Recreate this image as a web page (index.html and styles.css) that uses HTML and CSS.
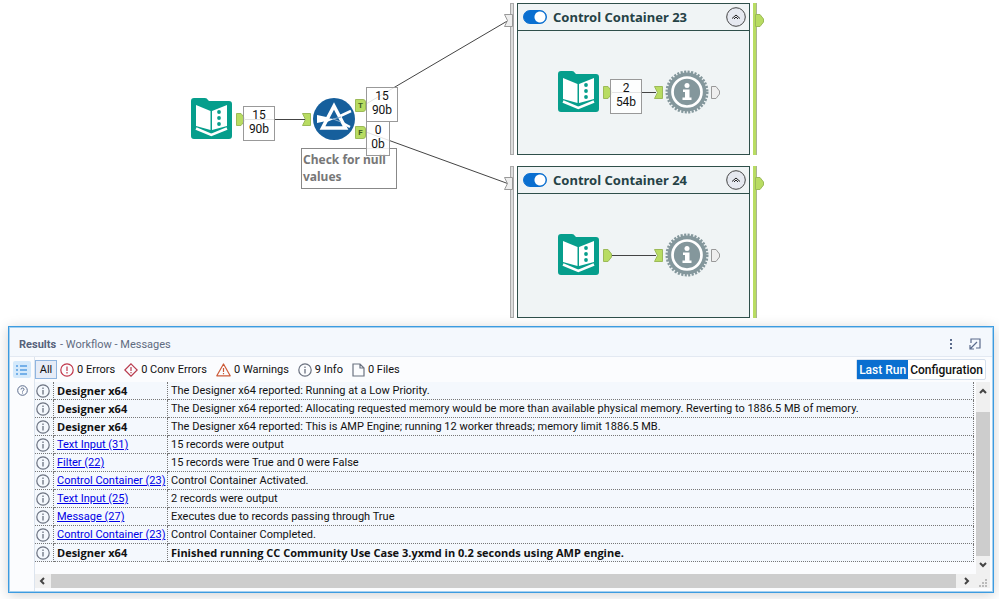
FILE: index.html
```html
<!DOCTYPE html>
<html lang="en">
<head>
    <meta charset="utf-8">
    <title>Designer - Workflow</title>
    <meta name="viewport" content="width=device-width, initial-scale=1.0">
    <link rel="stylesheet" href="styles.css">
</head>
<body>
    <!-- Shared icons -->
    <svg class="sprite" aria-hidden="true">
        <symbol id="book" viewBox="0 0 41 41">
            <path d="M3 0H14Q16 0 17 2L18 3H38Q41 3 41 6V38Q41 41 38 41H3Q0 41 0 38V3Q0 0 3 0Z" fill="#069e8c"/>
            <path d="M5 7L19.500 13V32L5 28Z" fill="#fff"/>
            <path d="M21 13L36 7V28L21 32Z" fill="#fff"/>
            <path d="M5 30.500L20.300 37L36 30.500" fill="none" stroke="#fff" stroke-width="2.500"/>
            <circle cx="28" cy="14" r="1.900" fill="#069e8c"/>
            <circle cx="28" cy="20" r="1.900" fill="#069e8c"/>
            <circle cx="28" cy="26" r="1.900" fill="#069e8c"/>
        </symbol>
        <symbol id="filter" viewBox="0 0 42 42">
            <circle cx="21" cy="21" r="21" fill="#165f9c"/>
            <path d="M4 17L18 20V22L4 25Z" fill="#fff"/>
            <path d="M24 19.500L38 13M24 22L37 29" stroke="#fff" stroke-width="2.500"/>
            <path d="M21 8L32.500 30H9.500Z" fill="#165f9c" stroke="#fff" stroke-width="3.500"/>
            <path d="M13 20L21 21L14 24Z" fill="#fff"/>
            <path d="M20 21L28 19M20 21L28 24" stroke="#8fb2d0" stroke-width="1"/>
        </symbol>
        <symbol id="gear" viewBox="0 0 44 44">
            <circle cx="22" cy="22" r="20" fill="none" stroke="#84979c" stroke-width="3" stroke-dasharray="2.100 1.390"/>
            <circle cx="22" cy="22" r="19.500" fill="#84979c"/>
            <circle cx="22" cy="22" r="14.500" fill="none" stroke="#fff" stroke-width="2.700"/>
            <circle cx="22" cy="15.500" r="2.500" fill="#fff"/>
            <path d="M18 19.500H24.500V27.500H26.500V30H17.500V27.500H20V22H18Z" fill="#fff"/>
        </symbol>
        <symbol id="port-out" viewBox="0 0 9 13">
            <path d="M.5 .5H5L8.500 5V8L5 12.500H.5Z"/>
        </symbol>
        <symbol id="port-in" viewBox="0 0 9 13">
            <path d="M.5 .5H8.500V12.500H.5L3.500 6.500Z"/>
        </symbol>
        <symbol id="collapse" viewBox="0 0 20 20">
            <circle cx="10" cy="10" r="9.300" fill="#e6e9f0" stroke="#444" stroke-width="1"/>
            <path d="M6 11.500L10 8L14 11.500M8 12L10 10L12 12" fill="none" stroke="#222" stroke-width="1"/>
        </symbol>
        <symbol id="info" viewBox="0 0 14 14">
            <circle cx="7" cy="7" r="6.200" fill="none" stroke="#6b7280" stroke-width="1.200"/>
            <path d="M7 6V10.500M7 3.500V5" stroke="#6b7280" stroke-width="1.300"/>
        </symbol>
    </svg>

    <main class="canvas">
        <svg class="wires" aria-hidden="true">
            <path d="M243 119.500H305M366 104L509 20M366 132L509 184"/>
        </svg>

        <svg class="node input-main"><use href="#book"/></svg>
        <svg class="port green input-main-out"><use href="#port-out"/></svg>
        <svg class="port green filter-in"><use href="#port-in"/></svg>
        <svg class="node filter"><use href="#filter"/></svg>
        <span class="anchor anchor-true">T</span>
        <span class="anchor anchor-false">F</span>
        <div class="annotation">Check for null values</div>
        <div class="count count-main">15<br>90b</div>
        <div class="count count-true">15<br>90b</div>
        <div class="count count-false">0<br>0b</div>

        <section class="container container-23">
            <div class="rail rail-in"></div>
            <div class="box">
                <header class="box-header">
                    <input type="checkbox" class="toggle" id="cc23" checked>
                    <label for="cc23">Control Container 23</label>
                    <button type="button" class="collapse" aria-label="Collapse"><svg><use href="#collapse"/></svg></button>
                </header>
                <div class="box-body">
                    <svg class="wires" aria-hidden="true"><path d="M92 61.500H138"/></svg>
                    <svg class="node inner-input"><use href="#book"/></svg>
                    <svg class="port green inner-out"><use href="#port-out"/></svg>
                    <div class="count count-inner">2<br>54b</div>
                    <svg class="port green message-in"><use href="#port-in"/></svg>
                    <svg class="message"><use href="#gear"/></svg>
                    <svg class="port grey message-out"><use href="#port-out"/></svg>
                </div>
            </div>
            <div class="rail rail-out"></div>
            <svg class="port grey container-in"><use href="#port-in"/></svg>
            <svg class="port green container-out"><use href="#port-out"/></svg>
        </section>

        <section class="container container-24">
            <div class="rail rail-in"></div>
            <div class="box">
                <header class="box-header">
                    <input type="checkbox" class="toggle" id="cc24" checked>
                    <label for="cc24">Control Container 24</label>
                    <button type="button" class="collapse" aria-label="Collapse"><svg><use href="#collapse"/></svg></button>
                </header>
                <div class="box-body">
                    <svg class="wires" aria-hidden="true"><path d="M92 61.500H138"/></svg>
                    <svg class="node inner-input"><use href="#book"/></svg>
                    <svg class="port green inner-out"><use href="#port-out"/></svg>
                    <svg class="port green message-in"><use href="#port-in"/></svg>
                    <svg class="message"><use href="#gear"/></svg>
                    <svg class="port grey message-out"><use href="#port-out"/></svg>
                </div>
            </div>
            <div class="rail rail-out"></div>
            <svg class="port grey container-in"><use href="#port-in"/></svg>
            <svg class="port green container-out"><use href="#port-out"/></svg>
        </section>
    </main>

    <section class="results">
        <header class="results-title">
            <h2>Results</h2>
            <span>- Workflow - Messages</span>
            <button type="button" class="icon-button" aria-label="More">
                <svg width="12" height="14" viewBox="0 0 12 14" fill="#5a6b8c"><rect x="5" y="2" width="2" height="2"/><rect x="5" y="6" width="2" height="2"/><rect x="5" y="10" width="2" height="2"/></svg>
            </button>
            <button type="button" class="icon-button" aria-label="Dock">
                <svg width="12" height="12" viewBox="0 0 12 12" fill="none" stroke="#5a6b8c" stroke-width="1.200"><path d="M2 5V1H11V10H7M8 4L1 11M1 7V11H5"/></svg>
            </button>
        </header>

        <div class="results-body">
            <nav class="side">
                <button type="button" class="side-button active" aria-label="Messages">
                    <svg width="12" height="10" viewBox="0 0 12 10" stroke="#1579d8" stroke-width="1.200"><path d="M0 1H2M0 5H2M0 9H2M4 1H11M4 5H11M4 9H11"/></svg>
                </button>
                <button type="button" class="side-button" aria-label="Help">
                    <svg width="11" height="11" viewBox="0 0 11 11" fill="none" stroke="#5a6b8c"><circle cx="5.500" cy="5.500" r="4.800"/><path d="M4 4.500Q4 3 5.500 3T7 4.500Q7 5.300 5.500 6V6.500M5.500 7.500V8.500"/></svg>
                </button>
            </nav>

            <div class="main">
                <div class="toolbar">
                    <button type="button" class="filter-button all">All</button>
                    <button type="button" class="filter-button">
                        <svg width="14" height="14" viewBox="0 0 14 14" fill="none" stroke="#c0364a" stroke-width="1.200"><circle cx="7" cy="7" r="6.200"/><path d="M7 3.500V8M7 9V10.500"/></svg>
                        0 Errors
                    </button>
                    <button type="button" class="filter-button">
                        <svg width="14" height="14" viewBox="0 0 14 14" fill="none" stroke="#b83a4c" stroke-width="1.200"><path d="M7 .8L13.200 7L7 13.200L.8 7ZM7 4V8M7 9V10.300"/></svg>
                        0 Conv Errors
                    </button>
                    <button type="button" class="filter-button">
                        <svg width="15" height="14" viewBox="0 0 15 14" fill="none" stroke="#cc5a38" stroke-width="1.200" stroke-linejoin="round"><path d="M7.500 1L14.200 12.800H.8ZM7.500 5V9M7.500 10V11.300"/></svg>
                        0 Warnings
                    </button>
                    <button type="button" class="filter-button">
                        <svg width="14" height="14"><use href="#info"/></svg>
                        9 Info
                    </button>
                    <button type="button" class="filter-button">
                        <svg width="13" height="14" viewBox="0 0 13 14" fill="none" stroke="#6b7280" stroke-width="1.200"><path d="M1 1H8L12 5V13H1ZM8 1V5H12"/></svg>
                        0 Files
                    </button>
                    <div class="run-tabs">
                        <button type="button" class="selected">Last Run</button>
                        <button type="button">Configuration</button>
                    </div>
                </div>

                <div class="list">
                    <table class="messages">
                        <colgroup>
                            <col class="col-icon">
                            <col class="col-tool">
                            <col>
                        </colgroup>
                        <tbody>
                            <tr><td><svg><use href="#info"/></svg></td><td><b>Designer x64</b></td><td>The Designer x64 reported: Running at a Low Priority.</td></tr>
                            <tr><td><svg><use href="#info"/></svg></td><td><b>Designer x64</b></td><td>The Designer x64 reported: Allocating requested memory would be more than available physical memory. Reverting to 1886.5 MB of memory.</td></tr>
                            <tr><td><svg><use href="#info"/></svg></td><td><b>Designer x64</b></td><td>The Designer x64 reported: This is AMP Engine; running 12 worker threads; memory limit 1886.5 MB.</td></tr>
                            <tr><td><svg><use href="#info"/></svg></td><td><a href="#">Text Input (31)</a></td><td>15 records were output</td></tr>
                            <tr><td><svg><use href="#info"/></svg></td><td><a href="#">Filter (22)</a></td><td>15 records were True and 0 were False</td></tr>
                            <tr><td><svg><use href="#info"/></svg></td><td><a href="#">Control Container (23)</a></td><td>Control Container Activated.</td></tr>
                            <tr><td><svg><use href="#info"/></svg></td><td><a href="#">Text Input (25)</a></td><td>2 records were output</td></tr>
                            <tr><td><svg><use href="#info"/></svg></td><td><a href="#">Message (27)</a></td><td>Executes due to records passing through True</td></tr>
                            <tr><td><svg><use href="#info"/></svg></td><td><a href="#">Control Container (23)</a></td><td>Control Container Completed.</td></tr>
                            <tr><td><svg><use href="#info"/></svg></td><td><b>Designer x64</b></td><td><b>Finished running CC Community Use Case 3.yxmd in 0.2 seconds using AMP engine.</b></td></tr>
                        </tbody>
                    </table>
                    <div class="scroll-y">
                        <svg width="14" height="18" viewBox="0 0 14 18"><path d="M4 11L7 8L10 11"/></svg>
                        <div class="thumb"></div>
                        <svg width="14" height="18" viewBox="0 0 14 18"><path d="M4 7L7 10L10 7"/></svg>
                    </div>
                </div>
                <div class="scroll-x">
                    <svg width="16" height="14" viewBox="0 0 16 14"><path d="M9 4L6 7L9 10"/></svg>
                    <div class="thumb"></div>
                    <svg width="20" height="14" viewBox="0 0 20 14"><path d="M9 4L12 7L9 10"/></svg>
                    <svg class="grip" width="14" height="14" viewBox="0 0 14 14"><path d="M9 5h2v2h-2zM6 8h2v2h-2zM9 8h2v2h-2zM3 11h2v2h-2zM6 11h2v2h-2zM9 11h2v2h-2z"/></svg>
                </div>
            </div>
        </div>
    </section>
</body>
</html>
```

FILE: styles.css
```css
* {
    box-sizing: border-box;
}

body {
    margin: 0;
    background-color: #fff;
    font-family: Roboto, sans-serif;
    font-size: 11px;
    color: #111;
}

button {
    padding: 0;
    border: none;
    background: none;
    font: inherit;
    color: inherit;
}

svg {
    display: block;
    flex: none;
}

.sprite {
    position: absolute;
    width: 0;
    height: 0;
}

/* Workflow canvas: tools are placed freely */
.canvas {
    position: relative;
    height: 326px;
    overflow: hidden;
}

.wires {
    position: absolute;
    top: 0;
    left: 0;
    width: 100%;
    height: 100%;
    fill: none;
    stroke: #444;
    stroke-width: 1;
}

.node,
.message,
.port,
.anchor,
.annotation,
.count,
.container {
    position: absolute;
}

.node {
    width: 41px;
    height: 41px;
}

.message {
    width: 44px;
    height: 44px;
}

.port {
    width: 9px;
    height: 13px;
}

.green {
    fill: #b8dc62;
    stroke: #9cba58;
}

.grey {
    fill: #eee;
    stroke: #999;
}

.input-main { left: 191px; top: 98px; }
.input-main-out { left: 236px; top: 113px; }
.filter-in { left: 302px; top: 113px; }
.filter { left: 313px; top: 98px; width: 42px; height: 42px; }

.anchor {
    width: 11px;
    height: 13px;
    background-color: #b8dc62;
    border: 1px solid #9cba58;
    border-radius: 0 3px 3px 0;
    font-size: 8px;
    font-weight: bold;
    line-height: 11px;
    text-align: center;
    color: #3d5a1e;
}

.anchor-true { left: 355px; top: 99px; }
.anchor-false { left: 355px; top: 126px; }

.annotation {
    left: 301px;
    top: 148px;
    width: 96px;
    height: 41px;
    padding: 2px 1px;
    border: 1px solid #888;
    background-color: #fff;
    font-family: "Noto Sans", sans-serif;
    font-size: 12px;
    font-weight: bold;
    line-height: 17px;
    color: #777;
}

/* Record count and size shown on a connection */
.count {
    width: 32px;
    height: 35px;
    border: 1px solid #999;
    background-color: rgba(255, 255, 255, 0.85);
    font-size: 12px;
    line-height: 14px;
    padding-top: 1px;
    text-align: center;
}

.count-main { left: 243px; top: 106px; }
.count-true { left: 366px; top: 87px; }
.count-false { left: 366px; top: 121px; width: 24px; }

/* Control containers */
.container {
    left: 510px;
    display: flex;
    gap: 3px;
    height: 152px;
}

.container-23 { top: 3px; }
.container-24 { top: 166px; }

.rail {
    width: 4px;
    border: 1px solid #aaa;
    background-color: #ddd;
}

.rail-out {
    border: none;
    border-left: 3px solid #b8dc62;
    background-color: #aab58f;
}

.box {
    width: 233px;
    border: 1px solid #2f4f4a;
    background-color: #f0f4f5;
}

.box-header {
    display: flex;
    align-items: center;
    height: 27px;
    padding: 0 3px 0 5px;
    border-bottom: 1px solid #2f4f4a;
}

.box-header label {
    margin-left: 6px;
    font-family: "Noto Sans", sans-serif;
    font-size: 13px;
    font-weight: bold;
    color: #264246;
}

.toggle {
    appearance: none;
    width: 24px;
    height: 14px;
    margin: 0;
    border: 1px solid #0a6fd0;
    border-radius: 7px;
    background: radial-gradient(circle at 16px 6px, #fff 5px, #0a6fd0 6px);
}

.collapse {
    margin-left: auto;
}

.collapse svg {
    width: 20px;
    height: 20px;
}

.box-body {
    position: relative;
    height: 123px;
}

.inner-input { left: 40px; top: 40px; }
.inner-out { left: 85px; top: 55px; }
.count-inner { left: 92px; top: 48px; }
.message-in { left: 136px; top: 55px; }
.message { left: 147px; top: 39px; }
.message-out { left: 193px; top: 55px; }
.container-in { left: -6px; top: 11px; }
.container-out { left: 245px; top: 11px; }

/* Results panel */
.results {
    margin: 0 5px 7px 8px;
    border: 1px solid #3c9be0;
    outline: 1px solid #a4d0f0;
    outline-offset: -2px;
    padding: 1px;
    background-color: #fbfcfe;
    box-shadow: 0 2px 12px rgba(0, 0, 0, 0.18);
    position: relative;
}

.results-title {
    display: flex;
    align-items: center;
    gap: 4px;
    height: 29px;
    padding: 4px 11px 0 9px;
    border-bottom: 1px solid #e3e9f2;
    background-color: #f4f8fd;
    color: #5f6b80;
}

.results-title h2 {
    margin: 0;
    font-size: 11px;
    color: #55617a;
}

.icon-button {
    margin-left: 8px;
}

.results-title span {
    margin-right: auto;
}

.results-body {
    display: flex;
}

.side {
    width: 25px;
    padding: 4px 3px;
    border-right: 1px solid #dce4ee;
}

.side-button {
    display: flex;
    align-items: center;
    justify-content: center;
    width: 18px;
    height: 17px;
    margin-bottom: 4px;
}

.active {
    background-color: #d4e9fb;
    border-radius: 2px;
}

.main {
    flex: 1;
    min-width: 0;
}

.toolbar {
    display: flex;
    align-items: center;
    gap: 9px;
    height: 25px;
    padding-right: 6px;
}

.filter-button {
    display: flex;
    align-items: center;
    gap: 3px;
    height: 19px;
}

.all {
    width: 22px;
    margin-right: -6px;
    justify-content: center;
    border: 1px solid #8fb5e0;
    background-color: #e6ecf7;
}

.run-tabs {
    display: flex;
    margin-left: auto;
    border: 1px solid #d5dfec;
    border-radius: 2px;
    background-color: #fff;
    font-size: 12px;
    font-weight: 500;
}

.run-tabs button {
    height: 19px;
    padding: 0 2px;
}

.run-tabs .selected {
    background-color: #0a6fd0;
    color: #fff;
}

.list {
    display: flex;
    align-items: flex-start;
    gap: 2px;
    padding-right: 2px;
}

.messages {
    flex: 1;
    table-layout: fixed;
    width: 100%;
    border-collapse: separate;
    border-spacing: 0;
    background-color: #f4f8fd;
}

.col-icon {
    width: 19px;
}

.col-tool {
    width: 114px;
}

.messages td {
    height: 18px;
    padding: 0 3px;
    border-right: 1px dotted #777;
    border-bottom: 1px dotted #777;
    line-height: 17px;
    white-space: nowrap;
    overflow: hidden;
}

.messages td:first-child {
    padding: 0 2px 0 1px;
}

.messages b {
    display: block;
    font-family: "Open Sans", sans-serif;
}

.messages svg {
    width: 14px;
    height: 14px;
}

.messages a {
    color: #0000e6;
}

/* Scroll bars */
.scroll-y {
    display: flex;
    flex-direction: column;
    width: 14px;
    height: 192px;
    background-color: #f0f0f0;
}

.scroll-y .thumb {
    flex: 1;
    margin-top: 12px;
}

.thumb {
    background-color: #cdcdcd;
}

.scroll-x {
    display: flex;
    height: 14px;
    margin-bottom: 3px;
    margin-right: 2px;
    background-color: #f0f0f0;
}

.scroll-x .thumb {
    flex: 1;
}

.scroll-y svg,
.scroll-x svg {
    fill: none;
    stroke: #444;
    stroke-width: 2;
}

.scroll-x .grip {
    fill: #bbb;
    stroke: none;
}
```
